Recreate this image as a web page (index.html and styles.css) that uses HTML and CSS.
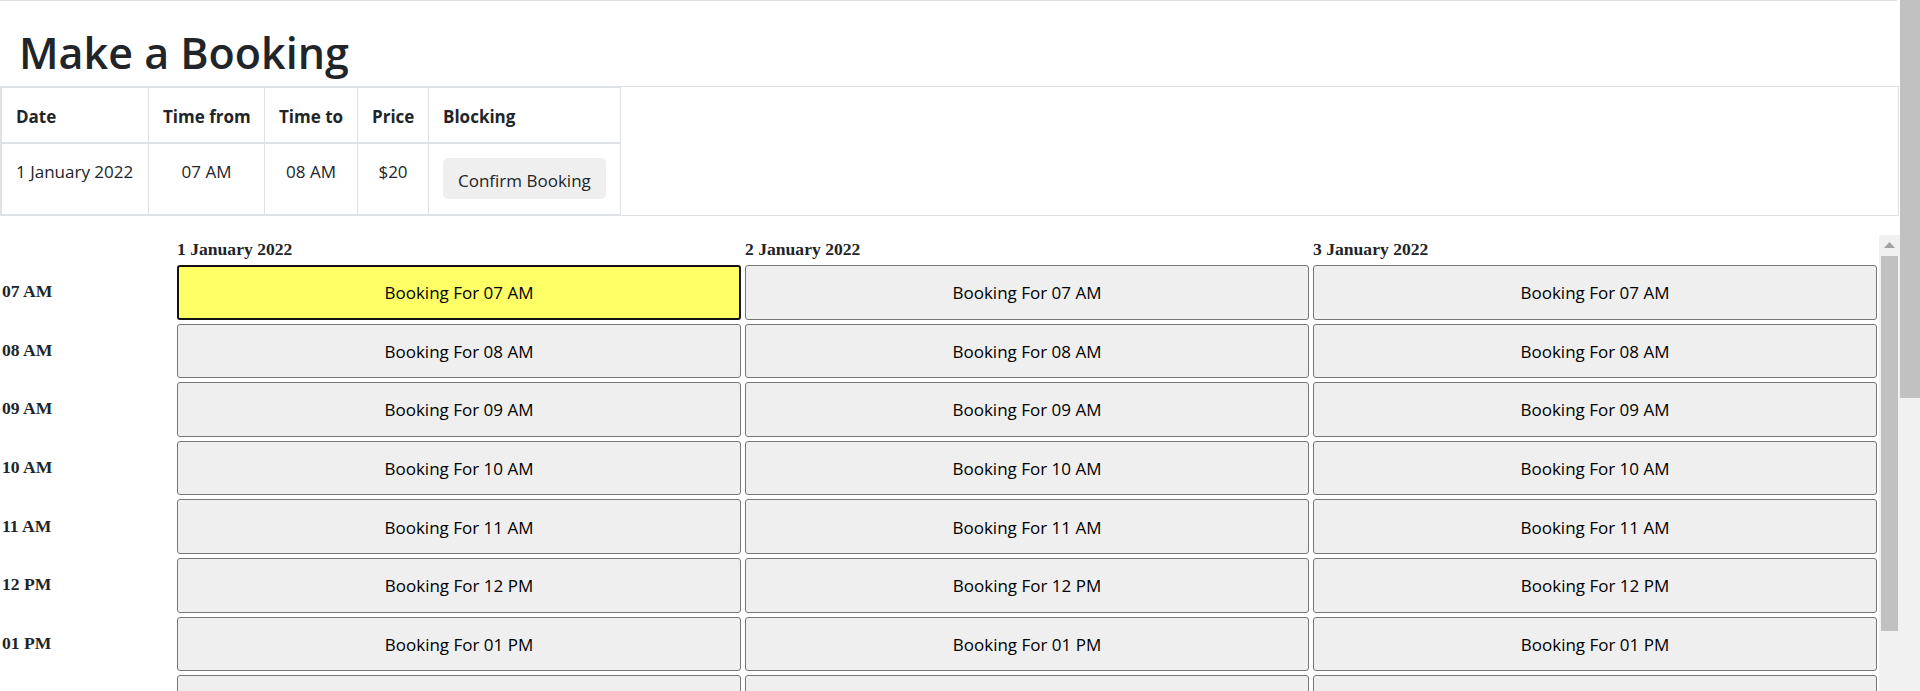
FILE: index.html
```html
<!DOCTYPE html>
<html lang="en">
<head>
<meta charset="utf-8">
<title>Make a Booking</title>
<link rel="stylesheet" href="styles.css">
</head>
<body>
<div class="viewport">
  <main class="page">
    <div class="topline"></div>
    <h1 class="title">Make a Booking</h1>
    <div class="summary">
      <table class="booking-table">
        <colgroup>
          <col class="c-date"><col class="c-from"><col class="c-to"><col class="c-price"><col class="c-block">
        </colgroup>
        <thead>
          <tr><th>Date</th><th>Time from</th><th>Time to</th><th>Price</th><th>Blocking</th></tr>
        </thead>
        <tbody>
          <tr>
            <td>1 January 2022</td>
            <td class="center">07 AM</td>
            <td class="center">08 AM</td>
            <td class="center">$20</td>
            <td><button class="confirm" type="button">Confirm Booking</button></td>
          </tr>
        </tbody>
      </table>
    </div>

    <div class="schedule">
      <div class="grid">
        <div class="corner"></div>
        <div class="day">1 January 2022</div>
        <div class="day">2 January 2022</div>
        <div class="day">3 January 2022</div>

        <div class="hour">07 AM</div>
        <button class="slot selected" type="button">Booking For 07 AM</button>
        <button class="slot" type="button">Booking For 07 AM</button>
        <button class="slot" type="button">Booking For 07 AM</button>

        <div class="hour">08 AM</div>
        <button class="slot" type="button">Booking For 08 AM</button>
        <button class="slot" type="button">Booking For 08 AM</button>
        <button class="slot" type="button">Booking For 08 AM</button>

        <div class="hour">09 AM</div>
        <button class="slot" type="button">Booking For 09 AM</button>
        <button class="slot" type="button">Booking For 09 AM</button>
        <button class="slot" type="button">Booking For 09 AM</button>

        <div class="hour">10 AM</div>
        <button class="slot" type="button">Booking For 10 AM</button>
        <button class="slot" type="button">Booking For 10 AM</button>
        <button class="slot" type="button">Booking For 10 AM</button>

        <div class="hour">11 AM</div>
        <button class="slot" type="button">Booking For 11 AM</button>
        <button class="slot" type="button">Booking For 11 AM</button>
        <button class="slot" type="button">Booking For 11 AM</button>

        <div class="hour">12 PM</div>
        <button class="slot" type="button">Booking For 12 PM</button>
        <button class="slot" type="button">Booking For 12 PM</button>
        <button class="slot" type="button">Booking For 12 PM</button>

        <div class="hour">01 PM</div>
        <button class="slot" type="button">Booking For 01 PM</button>
        <button class="slot" type="button">Booking For 01 PM</button>
        <button class="slot" type="button">Booking For 01 PM</button>

        <div class="hour">02 PM</div>
        <button class="slot" type="button">Booking For 02 PM</button>
        <button class="slot" type="button">Booking For 02 PM</button>
        <button class="slot" type="button">Booking For 02 PM</button>

        <div class="hour">03 PM</div>
        <button class="slot" type="button">Booking For 03 PM</button>
        <button class="slot" type="button">Booking For 03 PM</button>
        <button class="slot" type="button">Booking For 03 PM</button>
      </div>
      <div class="vbar" aria-hidden="true">
        <div class="vbar-up">
          <svg width="11" height="6" viewBox="0 0 11 6"><polygon points="0,6 11,6 5.5,0" fill="#a3a3a3"/></svg>
        </div>
        <div class="vbar-thumb"></div>
      </div>
    </div>
  </main>
  <div class="page-bar" aria-hidden="true">
    <div class="page-thumb"></div>
  </div>
</div>
</body>
</html>
```

FILE: styles.css
```css
html, body {
  margin: 0;
  padding: 0;
  height: 100%;
  overflow: hidden;
  background: #ffffff;
}

body {
  font-family: "Open Sans", "Noto Sans", "Liberation Sans", sans-serif;
  font-size: 17px;
  color: #212529;
}

.viewport {
  display: flex;
  height: 100vh;
  overflow: hidden;
}

.page {
  flex: 1;
  min-width: 0;
  display: flex;
  flex-direction: column;
  overflow: hidden;
}

.topline {
  height: 0;
  border-top: 1px solid #dee2e6;
  margin-right: 3px;
}

.title {
  margin: 26px 0 6px;
  padding: 0 19px;
  font-size: 43px;
  font-weight: 600;
  line-height: 52.8px;
  color: #212529;
}

.summary {
  border: 1px solid #dee2e6;
  margin-right: 1px;
}

.booking-table {
  border-collapse: collapse;
  table-layout: fixed;
  width: 619px;
}

.c-date { width: 147px; }
.c-from { width: 116px; }
.c-to { width: 93px; }
.c-price { width: 71px; }
.c-block { width: 192px; }

.booking-table th,
.booking-table td {
  border: 1px solid #dee2e6;
  line-height: 25.5px;
  vertical-align: top;
  text-align: left;
  white-space: nowrap;
}

.booking-table th {
  padding: 16px 14px 13px;
  font-weight: 700;
  border-bottom-width: 2px;
}

.booking-table td {
  padding: 15px 14px 15px;
}

.booking-table td.center {
  text-align: center;
}

.confirm {
  display: block;
  font-family: inherit;
  font-size: 17px;
  line-height: 25.5px;
  color: #212529;
  background: #efefef;
  border: 1px solid #efefef;
  border-radius: 5px;
  padding: 8.6px 14px 4.6px;
  margin: -1px 0 0;
}

.schedule {
  flex: 1;
  min-height: 0;
  margin-top: 19px;
  display: flex;
  overflow: hidden;
}

.grid {
  flex: 1;
  min-width: 0;
  display: grid;
  grid-template-columns: 173px repeat(3, 1fr);
  grid-template-rows: 26px;
  grid-auto-rows: 54.6px;
  column-gap: 4px;
  row-gap: 4px;
  padding-right: 2px;
  align-content: start;
  font-family: "Liberation Serif", "Times New Roman", serif;
  font-size: 17.6px;
  font-weight: 700;
  color: #212529;
}

.day {
  padding-top: 4px;
  line-height: 20px;
  white-space: nowrap;
}

.hour {
  display: flex;
  align-items: center;
  padding-left: 2px;
  padding-bottom: 1px;
}

.slot {
  box-sizing: border-box;
  width: 100%;
  height: 100%;
  margin: 0;
  padding: 1px 0 0;
  font-family: "Open Sans", "Noto Sans", "Liberation Sans", sans-serif;
  font-size: 17px;
  font-weight: 400;
  color: #000000;
  background: #efefef;
  border: 1px solid #767676;
  border-radius: 3px;
}

.slot.selected {
  background: #ffff66;
  border: 2px solid #111111;
}

.vbar {
  width: 21px;
  flex: none;
  background: #f1f1f1;
  display: flex;
  flex-direction: column;
  align-items: center;
}

.vbar-up {
  height: 21px;
  width: 100%;
  display: flex;
  align-items: center;
  justify-content: center;
}

.vbar-thumb {
  width: 17px;
  height: 375px;
  background: #c1c1c1;
}

.page-bar {
  width: 20px;
  flex: none;
  background: #f1f1f1;
}

.page-thumb {
  height: 398px;
  background: #c1c1c1;
}
```
